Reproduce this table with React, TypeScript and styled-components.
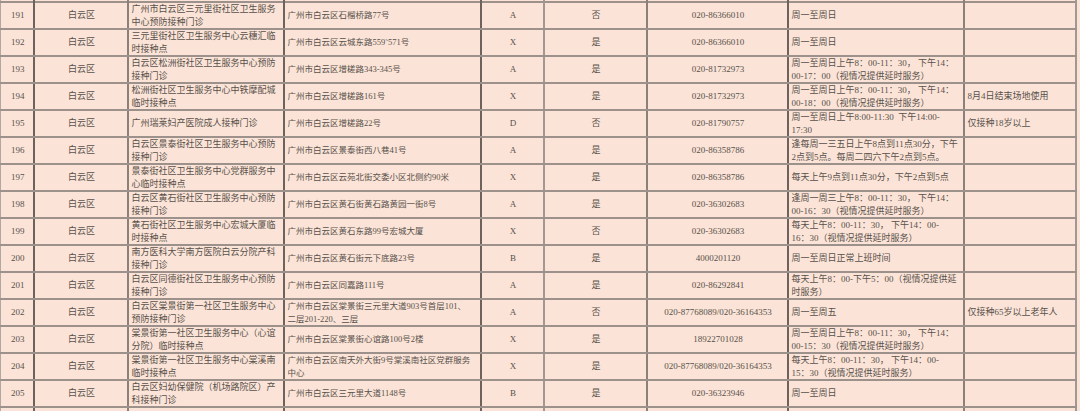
import React from 'react';
import styled, { createGlobalStyle } from 'styled-components';

type Align = 'left' | 'center';

interface Column {
  width: number;
  align: Align;
  edge: 'dark' | 'mid' | 'light';
  size: number;
}

const columns: Column[] = [
  { width: 33, align: 'center', edge: 'dark', size: 9 },
  { width: 94, align: 'center', edge: 'mid', size: 9 },
  { width: 156, align: 'left', edge: 'dark', size: 9 },
  { width: 197, align: 'left', edge: 'dark', size: 8.5 },
  { width: 63, align: 'center', edge: 'light', size: 9 },
  { width: 103, align: 'center', edge: 'mid', size: 9 },
  { width: 141, align: 'center', edge: 'dark', size: 9 },
  { width: 176, align: 'left', edge: 'mid', size: 9 },
  { width: 112, align: 'left', edge: 'light', size: 9 },
];

// num, district, site, address, type, 是否, phone, hours, note
type Site = [string, string, string, string, string, string, string, string, string];

const sites: Site[] = [
  ['191', '白云区', '广州市白云区三元里街社区卫生服务\n中心预防接种门诊', '广州市白云区石榴桥路77号', 'A', '否', '020-86366010', '周一至周日', ''],
  ['192', '白云区', '三元里街社区卫生服务中心云穗汇临\n时接种点', '广州市白云区云城东路559˜571号', 'X', '是', '020-86366010', '周一至周日', ''],
  ['193', '白云区', '白云区松洲街社区卫生服务中心预防\n接种门诊', '广州市白云区增槎路343-345号', 'A', '是', '020-81732973', '周一至周日上午8：00-11：30， 下午14：\n00-17：00（视情况提供延时服务）', ''],
  ['194', '白云区', '松洲街社区卫生服务中心中铁摩配城\n临时接种点', '广州市白云区增槎路161号', 'X', '是', '020-81732973', '周一至周日上午8：00-11：30， 下午14：\n00-18：00（视情况提供延时服务）', '8月4日结束场地使用'],
  ['195', '白云区', '广州瑞莱妇产医院成人接种门诊', '广州市白云区增槎路22号', 'D', '否', '020-81790757', '周一至周日上午8:00-11:30  下午14:00-\n17:30', '仅接种18岁以上'],
  ['196', '白云区', '白云区景泰街社区卫生服务中心预防\n接种门诊', '广州市白云区景泰街西八巷41号', 'A', '是', '020-86358786', '逢每周一三五日上午8点到11点30分，下午\n2点到5点。每周二四六下午2点到5点。', ''],
  ['197', '白云区', '景泰街社区卫生服务中心党群服务中\n心临时接种点', '广州市白云区云苑北街交委小区北侧约90米', 'X', '是', '020-86358786', '每天上午9点到11点30分，下午2点到5点', ''],
  ['198', '白云区', '白云区黄石街社区卫生服务中心预防\n接种门诊', '广州市白云区黄石街黄石路黄园一街8号', 'A', '是', '020-36302683', '逢周一周三上午8：00-11：30， 下午14：\n00-16：30（视情况提供延时服务）', ''],
  ['199', '白云区', '黄石街社区卫生服务中心宏城大厦临\n时接种点', '广州市白云区黄石东路99号宏城大厦', 'X', '否', '020-36302683', '每天上午8：00-11：30， 下午14：00-\n16：30（视情况提供延时服务）', ''],
  ['200', '白云区', '南方医科大学南方医院白云分院产科\n接种门诊', '广州市白云区黄石街元下底路23号', 'B', '是', '4000201120', '周一至周日正常上班时间', ''],
  ['201', '白云区', '白云区同德街社区卫生服务中心预防\n接种门诊', '广州市白云区同嘉路111号', 'A', '是', '020-86292841', '每天上午8：00-下午5：00（视情况提供延\n时服务）', ''],
  ['202', '白云区', '白云区棠景街第一社区卫生服务中心\n预防接种门诊', '广州市白云区棠景街三元里大道903号首层101、\n二层201-220、三层', 'A', '否', '020-87768089/020-36164353', '周一至周五', '仅接种65岁以上老年人'],
  ['203', '白云区', '棠景街第一社区卫生服务中心（心谊\n分院）临时接种点', '广州市白云区棠景街心谊路100号2楼', 'X', '是', '18922701028', '周一至周日上午8：00-11：30， 下午14：\n00-15：30（视情况提供延时服务）', ''],
  ['204', '白云区', '棠景街第一社区卫生服务中心棠溪南\n临时接种点', '广州市白云区南天外大街9号棠溪南社区党群服务\n中心', 'X', '是', '020-87768089/020-36164353', '每天上午8：00-11：30， 下午14：00-\n15：30（视情况提供延时服务）', ''],
  ['205', '白云区', '白云区妇幼保健院（机场路院区）产\n科接种门诊', '广州市白云区三元里大道1148号', 'B', '是', '020-36323946', '周一至周日', ''],
];

const edgeColor = {
  dark: '#6e625c',
  mid: '#8c807a',
  light: '#a39791',
};

const GlobalStyle = createGlobalStyle`
  html, body {
    margin: 0;
    padding: 0;
    background: #fae3d6;
    overflow: hidden;
  }
`;

const Sheet = styled.table`
  border-collapse: collapse;
  table-layout: fixed;
  width: 1076px;
  font-family: "Liberation Serif", "Noto Sans CJK SC", serif;
  line-height: 12.5px;
  color: #58504b;
  background: #fbe4d7;
`;

const Row = styled.tr<{ $h: number }>`
  height: ${(p) => p.$h}px;
`;

const Cell = styled.td<{ $align: Align; $edge: Column['edge']; $first: boolean; $size: number }>`
  padding: 0 1px 0 3px;
  font-size: ${(p) => p.$size}px;
  text-align: ${(p) => p.$align};
  vertical-align: middle;
  white-space: pre;
  overflow: hidden;
  border-top: 2px solid #9d918b;
  border-bottom: 2px solid #9d918b;
  border-right: 2px solid ${(p) => edgeColor[p.$edge]};
  border-left: ${(p) => (p.$first ? '1px solid #b3a7a1' : 'none')};
`;

const ClipCell = styled(Cell)`
  border-top: none;
  border-bottom: none;
  padding: 0;
  font-size: 0;
  line-height: 0;
`;

const ClippedRow: React.FC<{ height: number }> = ({ height }) => (
  <Row $h={height}>
    {columns.map((c, i) => (
      <ClipCell key={i} $align={c.align} $edge={c.edge} $first={i === 0} $size={0} />
    ))}
  </Row>
);

const SiteRow: React.FC<{ site: Site }> = ({ site }) => (
  <Row $h={26}>
    {site.map((text, i) => {
      const c = columns[i];
      return (
        <Cell key={i} $align={c.align} $edge={c.edge} $first={i === 0} $size={c.size}>
          {text}
        </Cell>
      );
    })}
  </Row>
);

const App: React.FC = () => (
  <>
    <GlobalStyle />
    <Sheet>
      <colgroup>
        {columns.map((c, i) => (
          <col key={i} style={{ width: c.width }} />
        ))}
      </colgroup>
      <tbody>
        <ClippedRow height={2} />
        {sites.map((s) => (
          <SiteRow key={s[0]} site={s} />
        ))}
        <ClippedRow height={6} />
      </tbody>
    </Sheet>
  </>
);

export default App;
